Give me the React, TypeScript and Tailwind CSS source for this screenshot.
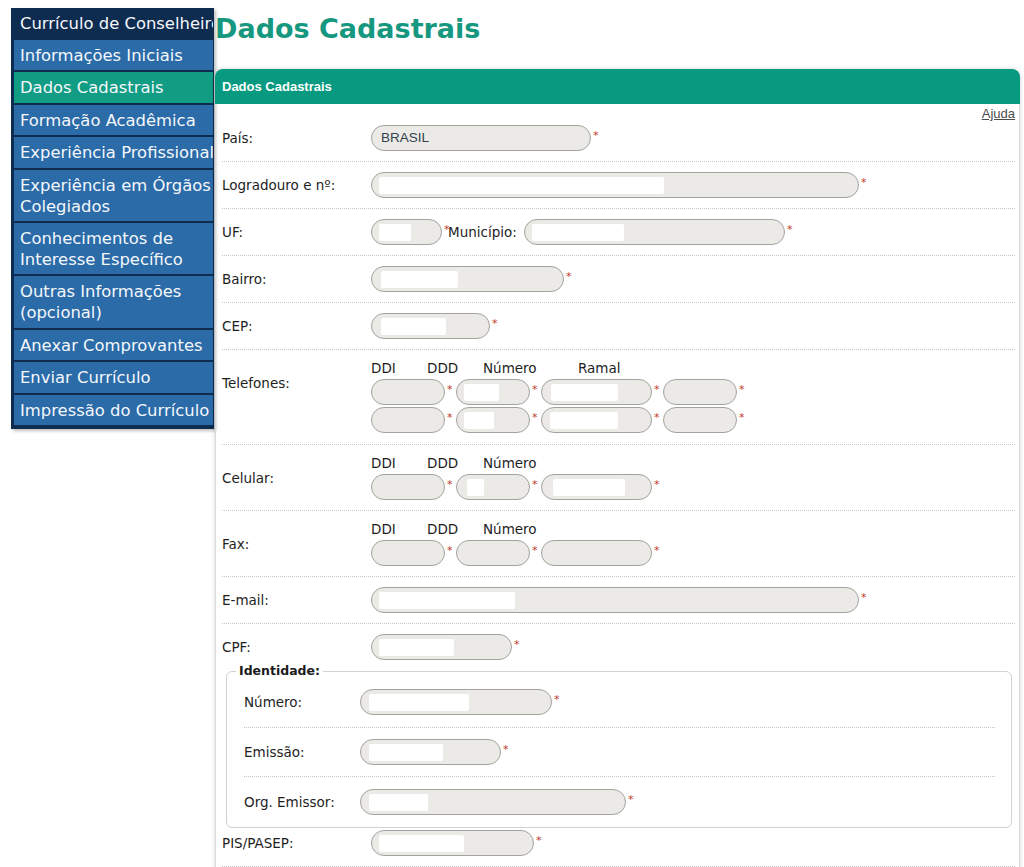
import React from "react";

const sans = "font-['DejaVu_Sans',Verdana,sans-serif]";
const arial = "font-['Liberation_Sans',Arial,sans-serif]";

const menu = [
  { lines: ["Informações Iniciais"] },
  { lines: ["Dados Cadastrais"], active: true },
  { lines: ["Formação Acadêmica"] },
  { lines: ["Experiência Profissional"] },
  { lines: ["Experiência em Órgãos", "Colegiados"] },
  { lines: ["Conhecimentos de", "Interesse Específico"] },
  { lines: ["Outras Informações", "(opcional)"] },
  { lines: ["Anexar Comprovantes"] },
  { lines: ["Enviar Currículo"] },
  { lines: ["Impressão do Currículo"] },
];

const Sidebar = () => (
  <nav
    className={`${sans} w-[203px] shrink-0 self-start overflow-hidden bg-[#0e2b50] border-l-[3px] border-b-[4px] border-r border-[#0e2b50] shadow-[2px_2px_3px_rgba(0,0,0,0.25)] flex flex-col gap-[2px] text-[16.4px] leading-[21px] text-[#f4f7fb]`}
  >
    <div className="h-[30px] pl-[6px] pt-[5px] whitespace-nowrap">Currículo de Conselheiro</div>
    {menu.map((m) => (
      <div
        key={m.lines[0]}
        className={`pl-[6px] pt-[5px] pb-[4.4px] whitespace-nowrap ${m.active ? "bg-[#119c84]" : "bg-[#2b6ba8]"}`}
      >
        {m.lines.map((l) => (
          <div key={l}>{l}</div>
        ))}
      </div>
    ))}
  </nav>
);

// rounded grey input; the white patch stands for data that was blanked out
const Box = ({ w, blob, children }: { w: string; blob?: string; children?: React.ReactNode }) => (
  <div className={`${w} h-[26px] shrink-0 rounded-full border border-[#a3a39e] bg-[#ebeae6] flex items-center`}>
    {blob && <div className={`${blob} h-[17px] rounded-[2px] bg-white`} />}
    {children}
  </div>
);

const Star = () => (
  <span className="self-start mt-[5px] w-[11px] pl-[2px] text-[11px] leading-none text-[#c0392b]">*</span>
);

const Field = ({ w, blob, children }: { w: string; blob?: string; children?: React.ReactNode }) => (
  <div className="flex items-start">
    <Box w={w} blob={blob}>
      {children}
    </Box>
    <Star />
  </div>
);

const Row = ({
  label,
  labelW = "w-[149px]",
  pad = "py-[10px]",
  line = true,
  children,
}: {
  label: string;
  labelW?: string;
  pad?: string;
  line?: boolean;
  children: React.ReactNode;
}) => (
  <div className={`flex items-center ${pad} ${line ? "border-b border-dotted border-[#c4c4c4]" : ""}`}>
    <div className={`${labelW} shrink-0`}>{label}</div>
    {children}
  </div>
);

const PhoneHead = ({ ramal }: { ramal?: boolean }) => (
  <div className="flex h-[16px] leading-[16px] mb-[3px]">
    <span className="w-[56px]">DDI</span>
    <span className="w-[56px]">DDD</span>
    <span className="w-[95px]">Número</span>
    {ramal && <span>Ramal</span>}
  </div>
);

const PhoneBlock = ({
  label,
  ramal,
  pad = "pt-[10px] pb-[10px]",
  rows,
}: {
  label: string;
  ramal?: boolean;
  pad?: string;
  rows: { ddd?: string; num?: string }[];
}) => (
  <div className={`flex items-start ${pad} border-b border-dotted border-[#c4c4c4]`}>
    <div className="w-[149px] shrink-0 mt-[15px] leading-[16px]">{label}</div>
    <div>
      <PhoneHead ramal={ramal} />
      <div className="flex flex-col gap-[2px]">
        {rows.map((r, i) => (
          <div key={i} className="flex">
            <Field w="w-[74px]" />
            <Field w="w-[74px]" blob={r.ddd} />
            <Field w="w-[111px]" blob={r.num} />
            {ramal && <Field w="w-[74px]" />}
          </div>
        ))}
      </div>
    </div>
  </div>
);

export default function App() {
  return (
    <div className={`${sans} h-[867px] overflow-hidden bg-white flex pt-[8px] pl-[11px] text-[13.5px] text-[#1e1e1e]`}>
      <Sidebar />

      <main className="flex-1 ml-[1px] mr-[4px]">
        <h1 className="mt-[7px] text-[27px] leading-[28px] font-bold text-[#16977f]">Dados Cadastrais</h1>

        <section className="mt-[26px] pb-[40px] rounded-t-[8px] border border-[#dadada] shadow-[0_0_4px_rgba(0,0,0,0.18)]">
          <header
            className={`${arial} h-[35px] -mx-px -mt-px rounded-t-[8px] bg-[#079a80] flex items-center pl-[7px] text-[13px] font-bold text-white`}
          >
            Dados Cadastrais
          </header>

          <div className="pl-[6px] pr-[4px]">
            <div className={`${arial} h-[19px] pt-[2px] text-right text-[13px] leading-[15px]`}>
              <a href="#" className="text-[#4b4b4b] underline">
                Ajuda
              </a>
            </div>

            <Row label="País:" pad="pt-[2px] pb-[10px]">
              <Field w="w-[220px]">
                <span className={`${arial} pl-[9px] text-[13.5px] text-[#34414f]`}>BRASIL</span>
              </Field>
            </Row>

            <Row label="Logradouro e nº:">
              <Field w="w-[488px]" blob="ml-[7px] w-[285px]" />
            </Row>

            <Row label="UF:">
              <Field w="w-[71px]" blob="ml-[7px] w-[32px]" />
              <span className="-ml-[5px] w-[76px]">Município:</span>
              <Field w="w-[261px]" blob="ml-[7px] w-[92px]" />
            </Row>

            <Row label="Bairro:">
              <Field w="w-[193px]" blob="ml-[9px] w-[77px]" />
            </Row>

            <Row label="CEP:">
              <Field w="w-[119px]" blob="ml-[9px] w-[65px]" />
            </Row>

            <PhoneBlock
              label="Telefones:"
              ramal
              pad="pt-[10px] pb-[11px]"
              rows={[
                { ddd: "ml-[7px] w-[35px]", num: "ml-[9px] w-[67px]" },
                { ddd: "ml-[7px] w-[30px]", num: "ml-[8px] w-[68px]" },
              ]}
            />

            <PhoneBlock label="Celular:" rows={[{ ddd: "ml-[10px] w-[17px]", num: "ml-[11px] w-[72px]" }]} />

            <PhoneBlock label="Fax:" rows={[{}]} />

            <Row label="E-mail:">
              <Field w="w-[488px]" blob="ml-[7px] w-[136px]" />
            </Row>

            <Row label="CPF:" pad="pt-[10px] pb-[3px]" line={false}>
              <Field w="w-[141px]" blob="ml-[7px] w-[75px]" />
            </Row>

            <fieldset className="ml-[4px] mr-[3px] rounded-[6px] border border-[#d2d2d2] px-0 pb-0">
              <legend className="ml-[9px] px-[3px] text-[12.5px] leading-[16px] font-bold text-[#1a1a1a]">
                Identidade:
              </legend>
              <div className="pl-[17px] pr-[16px]">
                <Row label="Número:" labelW="w-[116px]" pad="pt-[10px] pb-[12px]">
                  <Field w="w-[192px]" blob="ml-[8px] w-[100px]" />
                </Row>
                <Row label="Emissão:" labelW="w-[116px]" pad="py-[11px]">
                  <Field w="w-[141px]" blob="ml-[8px] w-[74px]" />
                </Row>
                <Row label="Org. Emissor:" labelW="w-[116px]" pad="pt-[12px] pb-[12px]" line={false}>
                  <Field w="w-[266px]" blob="ml-[8px] w-[59px]" />
                </Row>
              </div>
            </fieldset>

            <Row label="PIS/PASEP:" pad="pt-[2px] pb-[10px]">
              <Field w="w-[163px]" blob="ml-[7px] w-[85px]" />
            </Row>
          </div>
        </section>
      </main>
    </div>
  );
}
